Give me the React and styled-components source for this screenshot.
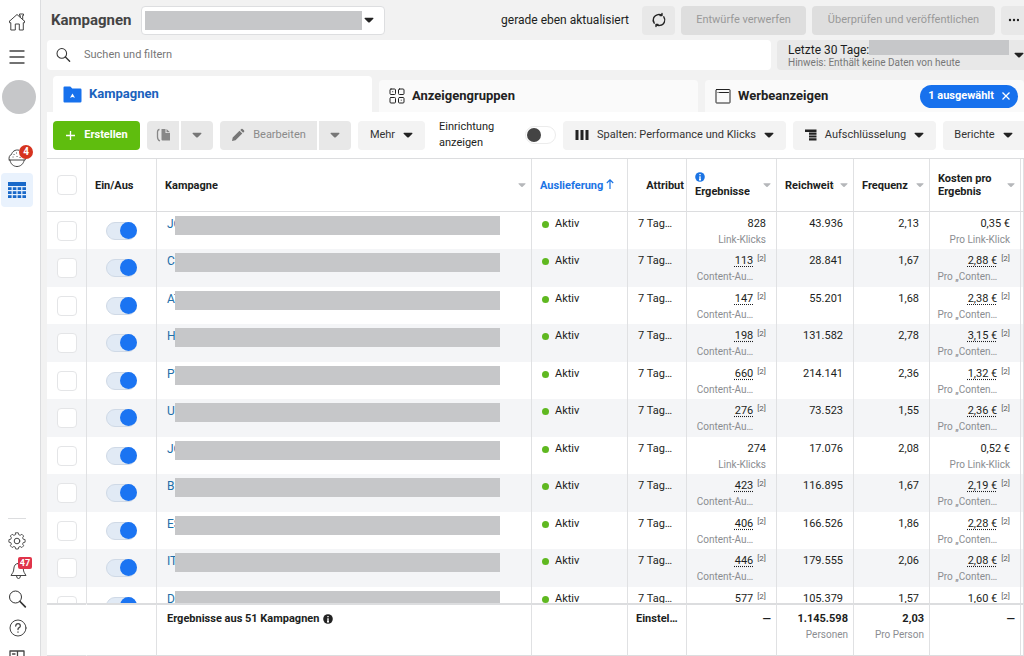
import styled, {createGlobalStyle} from 'styled-components';
import {useState} from 'react';

const GlobalStyle = createGlobalStyle`
  * {
    box-sizing: border-box;
  }

  body {
    margin: 0;
    background-color: #f2f2f2;
    color: #1c1e21;
    font-family: Roboto, 'Liberation Sans', sans-serif;
    font-size: 11px;
    line-height: 16px;
  }

  button, input, select {
    font: inherit;
    color: inherit;
    margin: 0;
  }
`

const Page = styled.div`
  display: flex;
  height: 100vh;
  overflow: hidden;
`

const Sidebar = styled.nav`
  display: flex;
  flex-direction: column;
  flex: none;
  align-items: center;
  width: 41px;
  padding-right: 6px;
  background-color: white;
  border-right: 1px solid #dcdddf;
`

const SideButton = styled.button`
  display: flex;
  flex: none;
  align-items: center;
  justify-content: center;
  position: relative;
  width: 32px;
  height: ${props => props.$height || 29}px;
  padding: 0;
  border: none;
  border-radius: 4px;
  background-color: ${props => props.$active ? '#e9f2fd' : 'transparent'};
  color: #444;
`

const SideTop = styled.div`
  display: flex;
  flex-direction: column;
  align-items: center;
  padding-top: 5px;
`

const SideBottom = styled.div`
  display: flex;
  flex-direction: column;
  align-items: center;
  margin-top: auto;
  margin-bottom: -15px;

  &::before {
    content: '';
    width: 18px;
    border-top: 1px solid #dcdddf;
    margin-bottom: 7px;
  }
`

const Avatar = styled.div`
  flex: none;
  width: 34px;
  height: 34px;
  margin: 5px 0 28px 4px;
  border-radius: 50%;
  background-color: #c6c7c9;
`

const Badge = styled.span`
  position: absolute;
  top: ${props => props.$square ? 2 : 3}px;
  right: ${props => props.$square ? 1 : 0}px;
  width: 14px;
  height: ${props => props.$square ? 12 : 14}px;
  border-radius: ${props => props.$square ? 2 : 7}px;
  background-color: ${props => props.$square ? '#e0344a' : '#d6331f'};
  color: white;
  font-size: ${props => props.$square ? 9 : 10}px;
  font-weight: bold;
  line-height: ${props => props.$square ? 12 : 14}px;
  text-align: center;
`

const Main = styled.main`
  display: flex;
  flex-direction: column;
  flex: 1;
  min-width: 0;
  padding-left: 6px;
`

const TopBar = styled.header`
  display: flex;
  flex: none;
  align-items: center;
  height: 40px;
  padding-left: 4px;
`

const Title = styled.h1`
  margin: 0 9px 0 0;
  font-size: 15px;
  line-height: 20px;
  color: #444;
`

const AccountBox = styled.label`
  display: flex;
  align-items: center;
  gap: 2px;
  width: 244px;
  height: 29px;
  padding-left: 3px;
  border: 1px solid #dddee0;
  border-radius: 4px;
  background-color: white;
`

const AccountSelect = styled.select`
  appearance: none;
  width: 217px;
  height: 19px;
  border: none;
  border-radius: 0;
  background-color: #c6c7c9;
`

const Updated = styled.span`
  margin-left: auto;
  margin-right: 13px;
  font-size: 12px;
`

const TopButton = styled.button`
  display: flex;
  flex: none;
  align-items: center;
  justify-content: center;
  width: ${props => props.$width}px;
  height: 29px;
  margin-right: ${props => props.$last ? 0 : 6}px;
  padding: 0;
  border: none;
  border-radius: ${props => props.$last ? '4px 0 0 4px' : '4px'};
  background-color: ${props => props.$muted ? '#dedede' : '#e8e8e8'};
  color: ${props => props.$muted ? '#999' : '#222'};
  white-space: nowrap;
`

const FilterBar = styled.div`
  display: flex;
  flex: none;
  gap: 6px;
  height: 30px;
`

const SearchBox = styled.label`
  display: flex;
  flex: 1;
  align-items: center;
  gap: 13px;
  padding-left: 8px;
  border-radius: 4px;
  background-color: white;
`

const SearchInput = styled.input`
  flex: 1;
  border: none;
  outline: none;
  padding: 0;
  background: none;

  &::placeholder {
    color: #777;
    opacity: 1;
  }
`

const DateButton = styled.button`
  display: flex;
  flex: none;
  align-items: center;
  justify-content: space-between;
  width: 247px;
  padding: 0 0 0 11px;
  border: none;
  border-radius: 4px 0 0 4px;
  background-color: #e8e8e8;
  text-align: left;
`

const DateText = styled.span`
  display: flex;
  flex-direction: column;
`

const DateRange = styled.span`
  display: flex;
  height: 16px;
  font-size: 12px;
  line-height: 20px;
  white-space: nowrap;
`

const DateHint = styled.span`
  font-size: 10px;
  line-height: 14px;
  color: #777;
`

const DateMask = styled.span`
  width: 140px;
  height: 15px;
  background-color: #c6c7c9;
`

const Tabs = styled.div`
  display: flex;
  flex: none;
  align-items: flex-end;
  gap: 7px;
  height: 42px;
  padding-left: 6px;
`

const Tab = styled.button`
  display: flex;
  flex: 1 0 0;
  align-items: center;
  gap: 7px;
  height: ${props => props.$active ? 36 : 32}px;
  padding: 0 6px 0 10px;
  border: none;
  border-radius: 4px 4px 0 0;
  background-color: ${props => props.$active ? 'white' : '#fafafa'};
  color: ${props => props.$active ? '#1a62bd' : '#222'};
  font-size: 13px;
  font-weight: bold;
`

const Chip = styled.span`
  display: flex;
  align-items: center;
  gap: 8px;
  height: 23px;
  margin-left: auto;
  padding: 0 8px;
  border-radius: 12px;
  background-color: #1771ed;
  color: white;
  font-size: 11px;
`

const Toolbar = styled.div`
  display: flex;
  flex: none;
  align-items: center;
  gap: 7px;
  height: 46px;
  padding-left: 6px;
  background-color: white;
`

const ButtonGroup = styled.div`
  display: flex;
  gap: 2px;
`

const ToolButton = styled.button`
  display: flex;
  flex: none;
  align-items: center;
  justify-content: center;
  gap: 8px;
  width: ${props => props.$width}px;
  height: 29px;
  padding: 0;
  border: none;
  border-radius: ${props => props.$radius || '4px'};
  background-color: ${props => props.$primary ? '#5fbd0e' : props.$muted ? '#e8e8e8' : '#f3f3f3'};
  color: ${props => props.$primary ? 'white' : props.$muted ? '#8a8a8a' : '#333'};
  font-weight: ${props => props.$primary ? 'bold' : 'normal'};
  white-space: nowrap;
`

const SetupLabel = styled.label`
  display: flex;
  align-items: center;
  justify-content: space-between;
  flex: 1;
  padding-left: 7px;
  max-width: 130px;
`

const SetupText = styled.span`
  width: 62px;
`

const Switch = styled.input`
  appearance: none;
  display: block;
  flex: none;
  width: 31px;
  height: 18px;
  border: 1px solid ${props => props.checked ? '#cfd9e6' : '#ececec'};
  border-radius: 9px;
  background-color: ${props => props.checked ? '#e1eaf5' : 'white'};

  &::before {
    content: '';
    display: block;
    width: ${props => props.checked ? 17 : 14}px;
    height: ${props => props.checked ? 17 : 14}px;
    margin: ${props => props.checked ? '-1px 0 0 13px' : '1px 0 0 1px'};
    border-radius: 50%;
    background-color: ${props => props.checked ? '#1b74f2' : '#444'};
  }
`

const TableArea = styled.div`
  flex: 1;
  min-height: 0;
  overflow: hidden;
  background-color: white;
  border-top: 1px solid #dcdddf;
`

const Table = styled.table`
  width: 100%;
  table-layout: fixed;
  border-collapse: separate;
  border-spacing: 0;
`

const Head = styled.th`
  height: 53px;
  padding: ${props => props.$bare ? '0' : props.$end ? '0 2px 0 8px' : '0 5px 0 8px'};
  border-right: 1px solid #e0e1e3;
  border-bottom: 1px solid #dcdddf;
  text-align: ${props => props.$end ? 'right' : 'left'};
  line-height: 13px;
  color: ${props => props.$sorted ? '#1b74e4' : 'inherit'};
  white-space: nowrap;
`

const HeadInner = styled.span`
  display: flex;
  align-items: center;
  justify-content: space-between;
  gap: 6px;
`

const HeadText = styled.span`
  overflow: hidden;
  white-space: ${props => props.$wrap ? 'normal' : 'nowrap'};
`

const Row = styled.tr`
  height: 37px;
  background-color: white;

  &:nth-child(even) {
    height: 38px;
    background-color: #f4f5f7;
  }
`

const Cell = styled.td`
  padding: ${props => props.$middle ? '0' : '4px 10px 0'};
  border-right: 1px solid #e0e1e3;
  vertical-align: ${props => props.$middle ? 'middle' : 'top'};
  white-space: nowrap;
`

const Centered = styled.div`
  display: flex;
  justify-content: center;
`

const Checkbox = styled.input`
  appearance: none;
  display: block;
  width: 20px;
  height: 20px;
  border: 1px solid #e4e5e7;
  border-radius: 4px;
  background-color: white;
`

const Name = styled.div`
  display: flex;
`

const NameLink = styled.a`
  width: 8px;
  color: #216fa9;
  font-size: 12px;
  text-decoration: none;
`

/* sits on top of the name, so only its first letter stays readable */
const NameMask = styled.span`
  position: relative;
  flex: 1;
  height: 19px;
  margin-right: 21px;
  background-color: #c6c7c9;
`

const Status = styled.span`
  display: flex;
  align-items: center;
  gap: 6px;

  &::before {
    content: '';
    width: 7px;
    height: 7px;
    border-radius: 50%;
    background-color: #5fb820;
  }
`

const Metric = styled.div`
  display: flex;
  justify-content: flex-end;
  gap: 4px;
`

const MetricText = styled.div`
  display: flex;
  flex-direction: column;
  align-items: flex-end;
`

const Value = styled.span`
  text-decoration: ${props => props.$noted ? 'underline dotted' : 'none'};
  text-underline-offset: 2px;
`

const Sub = styled.span`
  color: #8b8d91;
  font-size: 10px;
  font-weight: normal;
`

const Note = styled.span`
  color: #555;
  font-size: 8px;
  line-height: 12px;
`

const FootCell = styled.td`
  position: sticky;
  bottom: 0;
  height: 53px;
  padding: ${props => props.$label ? '6px 0 0 10px' : '6px 5px 0 8px'};
  border-top: 2px solid #dcdddf;
  border-right: 1px solid ${props => props.$open ? 'white' : '#e0e1e3'};
  border-bottom: 1px solid #dcdddf;
  background-color: white;
  vertical-align: top;
  font-weight: bold;
  white-space: nowrap;
`

const FootLabel = styled.span`
  display: flex;
  align-items: center;
  gap: 4px;
`

const Caret = ({size = 10, color = '#222'}) => (
    <svg width={size} height={size} viewBox="0 0 10 10" fill={color} style={{flex: 'none'}} aria-hidden="true">
        <path d="M1.200 2.700h7.600q1.200.2.500 1.100L5.800 7.200q-.8.6-1.600 0L.7 3.800Q0 2.900 1.200 2.700z"/>
    </svg>
)

const Icon = ({width = 20, height = width, children}) => (
    <svg width={width} height={height} viewBox={`0 0 ${width} ${height}`} fill="none" stroke="currentColor"
         strokeWidth="1" strokeLinecap="round" strokeLinejoin="round" aria-hidden="true">
        {children}
    </svg>
)

const HomeIcon = () => (
    <Icon>
        <path d="M2.500 9.200 10 2.500l7.500 6.700M2.500 9.200v1.500h1.300V18h4.500v-6h4v6h4v-7.300h1.200V9.200M13.300 5V3.500h-.8V2h4v1.500h-.8v3.800"/>
    </Icon>
)

const MenuIcon = () => <Icon><path strokeWidth="1.400" d="M3 4h14M3 10h14M3 16h14"/></Icon>

const CookieIcon = () => (
    <Icon>
        <path d="M12 2.200C8 1 5 4 4.500 6.500 2.500 7 1.500 9.500 2.200 12M2.200 12h16q.6-2-.5-4.500"/>
        <path d="M3 12.200C3.500 16 6.500 18.500 10 18.500s6.500-2.500 7.200-6.300M7 6.500h.1M6 9h.1M9.500 5h.1M10 8.500h.1M13 9.500h.1"/>
    </Icon>
)

const GridIcon = () => (
    <svg width="20" height="20" viewBox="0 0 20 20" fill="#1969c9" aria-hidden="true">
        <path d="M1 2h18v4H1z"/>
        {[7.200, 11.200, 15.200].map(y => [1, 5.8, 10.600, 15.400].map(x =>
            <rect key={`${x}-${y}`} x={x} y={y} width="3.600" height="2.800"/>))}
    </svg>
)

const GearIcon = () => (
    <Icon>
        <path d="M8.600 2h2.800l.5 2.100 1.600.7 1.900-1.200 2 2-1.200 1.900.7 1.600 2.100.5v2.800l-2.100.5-.7 1.600 1.200 1.900-2 2-1.900-1.200-1.600.7-.5 2.100H8.600l-.5-2.100-1.600-.7-1.900 1.200-2-2 1.200-1.900-.7-1.600L1 12.400V9.600l2.100-.5.7-1.600-1.200-1.900 2-2 1.900 1.200 1.600-.7z"
              transform="translate(1 0) scale(.9)"/>
        <circle cx="10" cy="10" r="2.800"/>
    </Icon>
)

const BellIcon = () => (
    <Icon>
        <path d="M11 3.500c-3 0-4 2.500-4.200 5.500C6.600 12 5.500 13 4 15.500h15c-1.500-2.500-2.500-3.500-2.700-6.500S14 3.500 11 3.500zM9.500 16q0 2.500 2 2.500t2-2.500"/>
    </Icon>
)

const SearchIcon = ({size = 20}) => (
    <svg width={size} height={size} viewBox="0 0 20 20" fill="none" stroke="#333"
         strokeWidth={size === 20 ? 1 : 1.300} aria-hidden="true">
        <circle cx="8.500" cy="8" r="6"/>
        <path strokeWidth="1.700" strokeLinecap="round" d="m13 12.500 5.300 5.300"/>
    </svg>
)

const HelpIcon = () => (
    <Icon>
        <circle cx="11" cy="10" r="8"/>
        <path d="M8.700 8q.2-2.300 2.400-2.300T13.300 8q0 1.100-1.200 1.700T11 11.500M11 14v.2" strokeWidth="1.300"/>
    </Icon>
)

const PanelIcon = () => (
    <Icon>
        <path strokeWidth="1.300" d="M3 4h14v12H3zM10.500 4v12M5.500 7h2.500M5.500 10h2.500"/>
    </Icon>
)

const RefreshIcon = () => (
    <Icon width={16}>
        <path strokeWidth="1.400" d="M3.200 11.200A5.500 5.500 0 0 1 7 2.600q2.200-.3 3.800.7M12.800 4.800A5.500 5.500 0 0 1 9 13.400q-2.200.3-3.800-.7M11 1.500v2H9M5 14.500v-2h2"/>
    </Icon>
)

const FolderIcon = () => (
    <svg width="19" height="17" viewBox="0 0 19 17" fill="#1771ed" aria-hidden="true">
        <path d="M1.500.5h5.800l2 2h8q1.200 0 1.200 1.200v11.500q0 1.300-1.300 1.300H1.500Q.5 16.500.5 15.500v-14Q.5.5 1.500.5z"/>
        <path fill="white" d="m9.500 7.500 2.500 4.300-2.500-.8-2.500.8z"/>
    </svg>
)

const GroupIcon = () => (
    <Icon width={16}>
        <rect x="1" y="1" width="5.500" height="5.500" rx="1"/>
        <rect x="9.500" y="1" width="5.500" height="5.500" rx="1"/>
        <rect x="1" y="9.500" width="5.500" height="5.500" rx="1"/>
        <rect x="9.500" y="9.500" width="5.500" height="5.500" rx="1"/>
        <path d="M3.700 3.700h.1M12.200 12.200h.1"/>
    </Icon>
)

const AdIcon = () => (
    <Icon width={16}>
        <rect x="1" y="1.500" width="14" height="13.500" rx=".5"/>
        <path d="M3 4.500h.1M4.500 4.500h9"/>
    </Icon>
)

const CopyIcon = () => (
    <svg width="15" height="14" viewBox="0 0 15 14" fill="#888" aria-hidden="true">
        <path d="M5.500 1h4v4H14v7.500H6.500q-1 0-1-1zM10.500 1 14 4.200h-3.500z"/>
        <path fill="none" stroke="#888" strokeWidth="1.300" d="M3.500 1.500Q1.500 1.500 1.500 4v5q0 3 2.500 4"/>
    </svg>
)

const PencilIcon = () => (
    <svg width="14" height="14" viewBox="0 0 14 14" fill="#777" aria-hidden="true">
        <path d="M1 13l.7-3.500L8.500 2.700l2.800 2.800-6.800 6.800zM9.300 1.900l1-1q.7-.5 1.300 0l1.500 1.500q.5.700 0 1.300l-1 1z"/>
    </svg>
)

const ColumnsIcon = () => (
    <svg width="14" height="12" viewBox="0 0 14 12" fill="#222" aria-hidden="true">
        <path d="M.5 1h3v10h-3zM5.500 1h3v10h-3zM10.500 1h3v10h-3z"/>
    </svg>
)

const BreakdownIcon = () => (
    <svg width="12" height="12" viewBox="0 0 12 12" fill="#222" aria-hidden="true">
        <path d="M0 .5h11.500v2.500H0zM4 3.600h7.500v2.200H4zM4 6.400h7.500v2.200H4zM4 9.200h7.500v2.300H4z"/>
    </svg>
)

const InfoIcon = ({color}) => (
    <svg width="10" height="10" viewBox="0 0 10 10" aria-hidden="true">
        <circle cx="5" cy="5" r="4.800" fill={color}/>
        <path stroke="white" strokeWidth="1.400" d="M5 2v1.300M5 4.300V8M4 7.700h2"/>
    </svg>
)

const ArrowUpIcon = () => (
    <svg width="8" height="10" viewBox="0 0 8 10" fill="none" stroke="#1b74e4" strokeWidth="1.200" aria-hidden="true">
        <path d="M4 10V1M.800 4 4 .9 7.200 4"/>
    </svg>
)

const CAMPAIGNS = [
    {name: 'JO', results: '828', reach: '43.936', frequency: '2,13', cost: '0,35 €', clicks: true},
    {name: 'C', results: '113', reach: '28.841', frequency: '1,67', cost: '2,88 €'},
    {name: 'AT', results: '147', reach: '55.201', frequency: '1,68', cost: '2,38 €'},
    {name: 'H', results: '198', reach: '131.582', frequency: '2,78', cost: '3,15 €'},
    {name: 'PT', results: '660', reach: '214.141', frequency: '2,36', cost: '1,32 €'},
    {name: 'U', results: '276', reach: '73.523', frequency: '1,55', cost: '2,36 €'},
    {name: 'JO', results: '274', reach: '17.076', frequency: '2,08', cost: '0,52 €', clicks: true},
    {name: 'B', results: '423', reach: '116.895', frequency: '1,67', cost: '2,19 €'},
    {name: 'ES', results: '406', reach: '166.526', frequency: '1,86', cost: '2,28 €'},
    {name: 'IT', results: '446', reach: '179.555', frequency: '2,06', cost: '2,08 €'},
    {name: 'D', results: '577', reach: '105.379', frequency: '1,57', cost: '1,60 €'},
]

const COLUMN_WIDTHS = [40, 70, null, 96, 59, 90, 77, 76, 91, 3];

const MetricCell = ({value, sub, noted}) => (
    <Cell>
        <Metric>
            <MetricText>
                <Value $noted={noted}>{value}</Value>
                {sub && <Sub>{sub}</Sub>}
            </MetricText>
            {noted && <Note>[2]</Note>}
        </Metric>
    </Cell>
)

const CampaignRow = ({campaign}) => {
    const [active, updateActive] = useState(true);
    const noted = !campaign.clicks;

    return (
        <Row>
            <Cell $middle><Centered><Checkbox type="checkbox" aria-label="Kampagne auswählen"/></Centered></Cell>
            <Cell $middle>
                <Centered>
                    <Switch type="checkbox" role="switch" aria-label="Ein/Aus" checked={active}
                            onChange={() => updateActive(!active)}/>
                </Centered>
            </Cell>
            <Cell>
                <Name>
                    <NameLink href="#">{campaign.name}</NameLink>
                    <NameMask/>
                </Name>
            </Cell>
            <Cell><Status>Aktiv</Status></Cell>
            <Cell>7 Tag…</Cell>
            <MetricCell value={campaign.results} sub={noted ? 'Content-Au…' : 'Link-Klicks'} noted={noted}/>
            <MetricCell value={campaign.reach}/>
            <MetricCell value={campaign.frequency}/>
            <MetricCell value={campaign.cost} sub={noted ? 'Pro „Conten…' : 'Pro Link-Klick'} noted={noted}/>
            <Cell $middle/>
        </Row>
    )
}

const SortHead = ({children, wrap}) => (
    <Head>
        <HeadInner>
            <HeadText $wrap={wrap}>{children}</HeadText>
            <Caret size={8} color="#b5b7ba"/>
        </HeadInner>
    </Head>
)

const FootMetric = ({value, sub}) => (
    <FootCell>
        <Metric>
            <MetricText>
                <span>{value}</span>
                {sub && <Sub>{sub}</Sub>}
            </MetricText>
        </Metric>
    </FootCell>
)

function App() {

    const [setup, updateSetup] = useState(false);
    const [query, updateQuery] = useState('');

    return (
        <Page>
            <GlobalStyle/>
            <Sidebar>
                <SideTop>
                    <SideButton $height={34} aria-label="Startseite"><HomeIcon/></SideButton>
                    <SideButton $height={36} aria-label="Menü"><MenuIcon/></SideButton>
                    <Avatar/>
                    <SideButton $height={31} aria-label="Konto"><CookieIcon/><Badge>4</Badge></SideButton>
                    <SideButton $height={34} $active aria-label="Kampagnen"><GridIcon/></SideButton>
                </SideTop>
                <SideBottom>
                    <SideButton aria-label="Einstellungen"><GearIcon/></SideButton>
                    <SideButton aria-label="Benachrichtigungen"><BellIcon/><Badge $square>47</Badge></SideButton>
                    <SideButton aria-label="Suche"><SearchIcon/></SideButton>
                    <SideButton aria-label="Hilfe"><HelpIcon/></SideButton>
                    <SideButton aria-label="Leiste"><PanelIcon/></SideButton>
                </SideBottom>
            </Sidebar>
            <Main>
                <TopBar>
                    <Title>Kampagnen</Title>
                    <AccountBox>
                        <AccountSelect aria-label="Werbekonto"/>
                        <Caret/>
                    </AccountBox>
                    <Updated>gerade eben aktualisiert</Updated>
                    <TopButton $width={33} aria-label="Aktualisieren"><RefreshIcon/></TopButton>
                    <TopButton $width={125} $muted>Entwürfe verwerfen</TopButton>
                    <TopButton $width={183} $muted>Überprüfen und veröffentlichen</TopButton>
                    <TopButton $width={23} $last aria-label="Weitere Optionen">
                        <svg width="12" height="4" viewBox="0 0 12 4" fill="#222">
                            <circle cx="3" cy="2" r="1.200"/>
                            <circle cx="7" cy="2" r="1.200"/>
                            <circle cx="11" cy="2" r="1.200"/>
                        </svg>
                    </TopButton>
                </TopBar>
                <FilterBar>
                    <SearchBox>
                        <SearchIcon size={16}/>
                        <SearchInput placeholder="Suchen und filtern" value={query}
                                     onChange={event => updateQuery(event.target.value)}/>
                    </SearchBox>
                    <DateButton>
                        <DateText>
                            <DateRange>Letzte 30 Tage:<DateMask/></DateRange>
                            <DateHint>Hinweis: Enthält keine Daten von heute</DateHint>
                        </DateText>
                        <Caret/>
                    </DateButton>
                </FilterBar>
                <Tabs>
                    <Tab $active><FolderIcon/>Kampagnen</Tab>
                    <Tab><GroupIcon/>Anzeigengruppen</Tab>
                    <Tab>
                        <AdIcon/>Werbeanzeigen
                        <Chip>
                            1 ausgewählt
                            <svg width="8" height="8" viewBox="0 0 8 8" stroke="white" strokeWidth="1.300">
                                <path d="m.5.5 7 7m0-7-7 7"/>
                            </svg>
                        </Chip>
                    </Tab>
                </Tabs>
                <Toolbar>
                    <ToolButton $width={87} $primary>
                        <svg width="11" height="11" viewBox="0 0 11 11" stroke="white" strokeWidth="1.300">
                            <path d="M5.500 1v9M1 5.500h9"/>
                        </svg>
                        Erstellen
                    </ToolButton>
                    <ButtonGroup>
                        <ToolButton $width={32} $muted $radius="4px 0 0 4px" aria-label="Duplizieren"><CopyIcon/></ToolButton>
                        <ToolButton $width={32} $muted $radius="0 4px 4px 0" aria-label="Mehr zum Duplizieren">
                            <Caret color="#777"/>
                        </ToolButton>
                    </ButtonGroup>
                    <ButtonGroup>
                        <ToolButton $width={97} $muted $radius="4px 0 0 4px"><PencilIcon/>Bearbeiten</ToolButton>
                        <ToolButton $width={32} $muted $radius="0 4px 4px 0" aria-label="Mehr zum Bearbeiten">
                            <Caret color="#777"/>
                        </ToolButton>
                    </ButtonGroup>
                    <ToolButton $width={67}>Mehr<Caret/></ToolButton>
                    <SetupLabel>
                        <SetupText>Einrichtung anzeigen</SetupText>
                        <Switch type="checkbox" role="switch" checked={setup} onChange={() => updateSetup(!setup)}/>
                    </SetupLabel>
                    <ToolButton $width={223}><ColumnsIcon/>Spalten: Performance und Klicks<Caret/></ToolButton>
                    <ToolButton $width={143}><BreakdownIcon/>Aufschlüsselung<Caret/></ToolButton>
                    <ToolButton $width={81} $radius="4px 0 0 4px">Berichte<Caret/></ToolButton>
                </Toolbar>
                <TableArea>
                    <Table>
                        <colgroup>
                            {COLUMN_WIDTHS.map((width, index) => <col key={index} width={width || undefined}/>)}
                        </colgroup>
                        <thead>
                            <tr>
                                <Head $bare>
                                    <Centered><Checkbox type="checkbox" aria-label="Alle auswählen"/></Centered>
                                </Head>
                                <Head>Ein/Aus</Head>
                                <SortHead>Kampagne</SortHead>
                                <Head $sorted>Auslieferung <ArrowUpIcon/></Head>
                                <Head $end>Attribut</Head>
                                <SortHead wrap><InfoIcon color="#1b74e4"/><br/>Ergebnisse</SortHead>
                                <SortHead>Reichweite</SortHead>
                                <SortHead>Frequenz</SortHead>
                                <SortHead wrap>Kosten pro Ergebnis</SortHead>
                                <Head $bare/>
                            </tr>
                        </thead>
                        <tbody>
                            {CAMPAIGNS.map((campaign, index) => <CampaignRow key={index} campaign={campaign}/>)}
                        </tbody>
                        <tfoot>
                            <tr>
                                <FootCell $open/>
                                <FootCell/>
                                <FootCell $label>
                                    <FootLabel>Ergebnisse aus 51 Kampagnen <InfoIcon color="#222"/></FootLabel>
                                </FootCell>
                                <FootCell/>
                                <FootCell>Einstel…</FootCell>
                                <FootMetric value="—"/>
                                <FootMetric value="1.145.598" sub="Personen"/>
                                <FootMetric value="2,03" sub="Pro Person"/>
                                <FootMetric value="—"/>
                                <FootCell/>
                            </tr>
                        </tfoot>
                    </Table>
                </TableArea>
            </Main>
        </Page>
    );
}

export default App;
